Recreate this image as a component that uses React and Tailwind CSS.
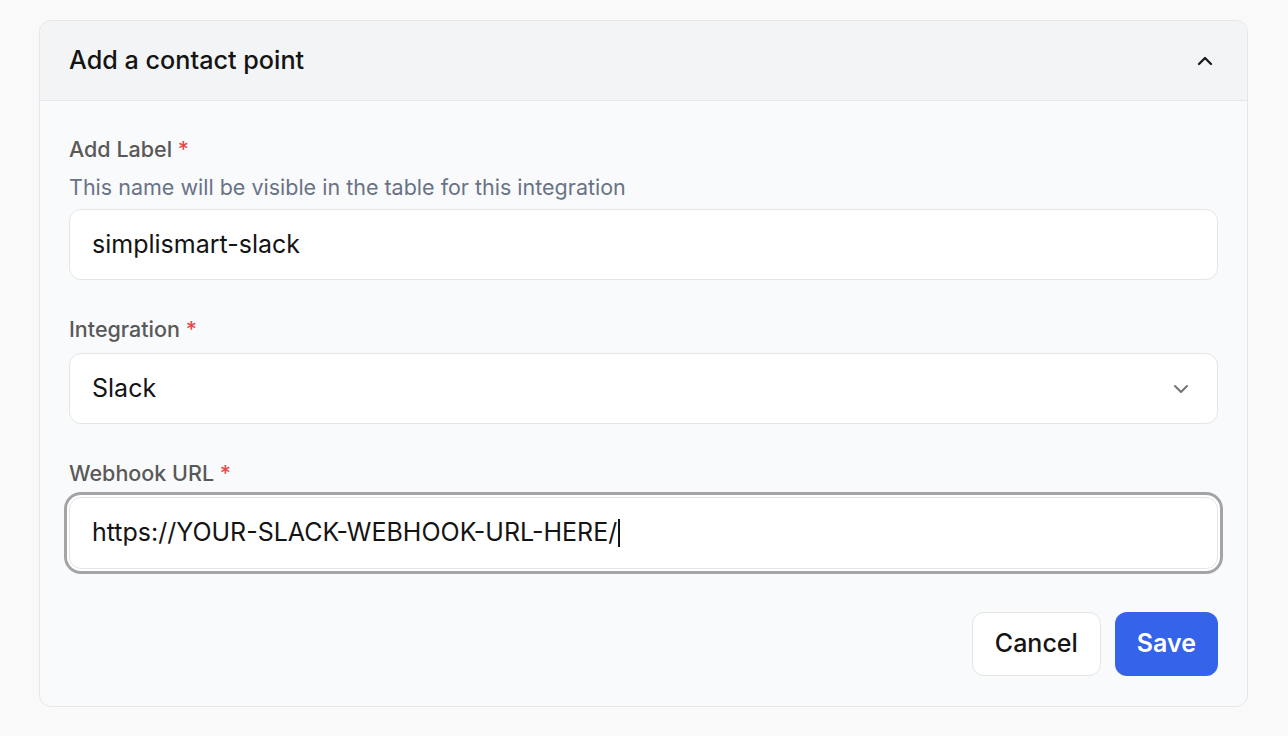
import { ChevronUp, ChevronDown } from 'lucide-react';

const Label = ({ children }) => (
  <div className="text-[21.5px] leading-[24px] font-medium text-[#595959]">
    {children} <span className="text-[#e5484d]">*</span>
  </div>
);

const ContactPointForm = () => {
  return (
    <div className="rounded-[12px] border border-[#e6e6e6] bg-[#f9fafb] overflow-hidden">
      {/* Collapsible header */}
      <div className="flex items-center justify-between h-[80px] px-[29px] bg-[#f3f4f6] border-b border-[#e5e7eb]">
        <h2 className="text-[25.2px] font-medium text-[#141414]">Add a contact point</h2>
        <ChevronUp className="w-[24px] h-[24px] mr-[1px] text-[#1a1a1a]" strokeWidth={2.3} />
      </div>

      <div className="pt-[36px] px-[29px] pb-[30px]">
        <Label>Add Label</Label>
        <p className="mt-[14px] text-[21.5px] leading-[24px] text-[#697386]">
          This name will be visible in the table for this integration
        </p>
        <div className="mt-[10px] h-[71px] flex items-center px-[22px] rounded-[12px] border border-[#e5e5e5] bg-white text-[25px] text-[#141414]">
          simplismart-slack
        </div>

        <div className="mt-[37px]">
          <Label>Integration</Label>
        </div>
        <div className="mt-[12px] h-[71px] flex items-center justify-between px-[22px] rounded-[12px] border border-[#e5e5e5] bg-white text-[25px] text-[#141414]">
          <span>Slack</span>
          <ChevronDown className="w-[24px] h-[24px] mr-[2px] text-[#737373]" strokeWidth={2} />
        </div>

        <div className="mt-[37px]">
          <Label>Webhook URL</Label>
        </div>
        <div className="mt-[12px] h-[72px] flex items-center px-[22px] rounded-[12px] border border-[#e5e5e5] bg-white text-[25px] text-[#141414] ring-[3px] ring-[#a3a3a8] ring-offset-2 ring-offset-white">
          <span>https://YOUR-SLACK-WEBHOOK-URL-HERE/</span>
          <span className="ml-[1px] w-[1.5px] h-[28px] bg-[#141414]" />
        </div>

        <div className="mt-[43px] flex justify-end gap-[14px]">
          <button className="h-[64px] px-[22px] rounded-[12px] border border-[#e5e5e5] bg-white text-[25px] font-medium text-[#141414]">
            Cancel
          </button>
          <button className="h-[64px] px-[22px] rounded-[12px] bg-[#3563e9] text-[25px] font-semibold text-white">
            Save
          </button>
        </div>
      </div>
    </div>
  );
};

export default function App() {
  return (
    <div className="min-h-screen bg-[#f9f9f9] pt-[20px] pl-[39px] pr-[40px]" style={{ fontFamily: 'Inter, "Noto Sans", sans-serif' }}>
      <ContactPointForm />
    </div>
  );
}
